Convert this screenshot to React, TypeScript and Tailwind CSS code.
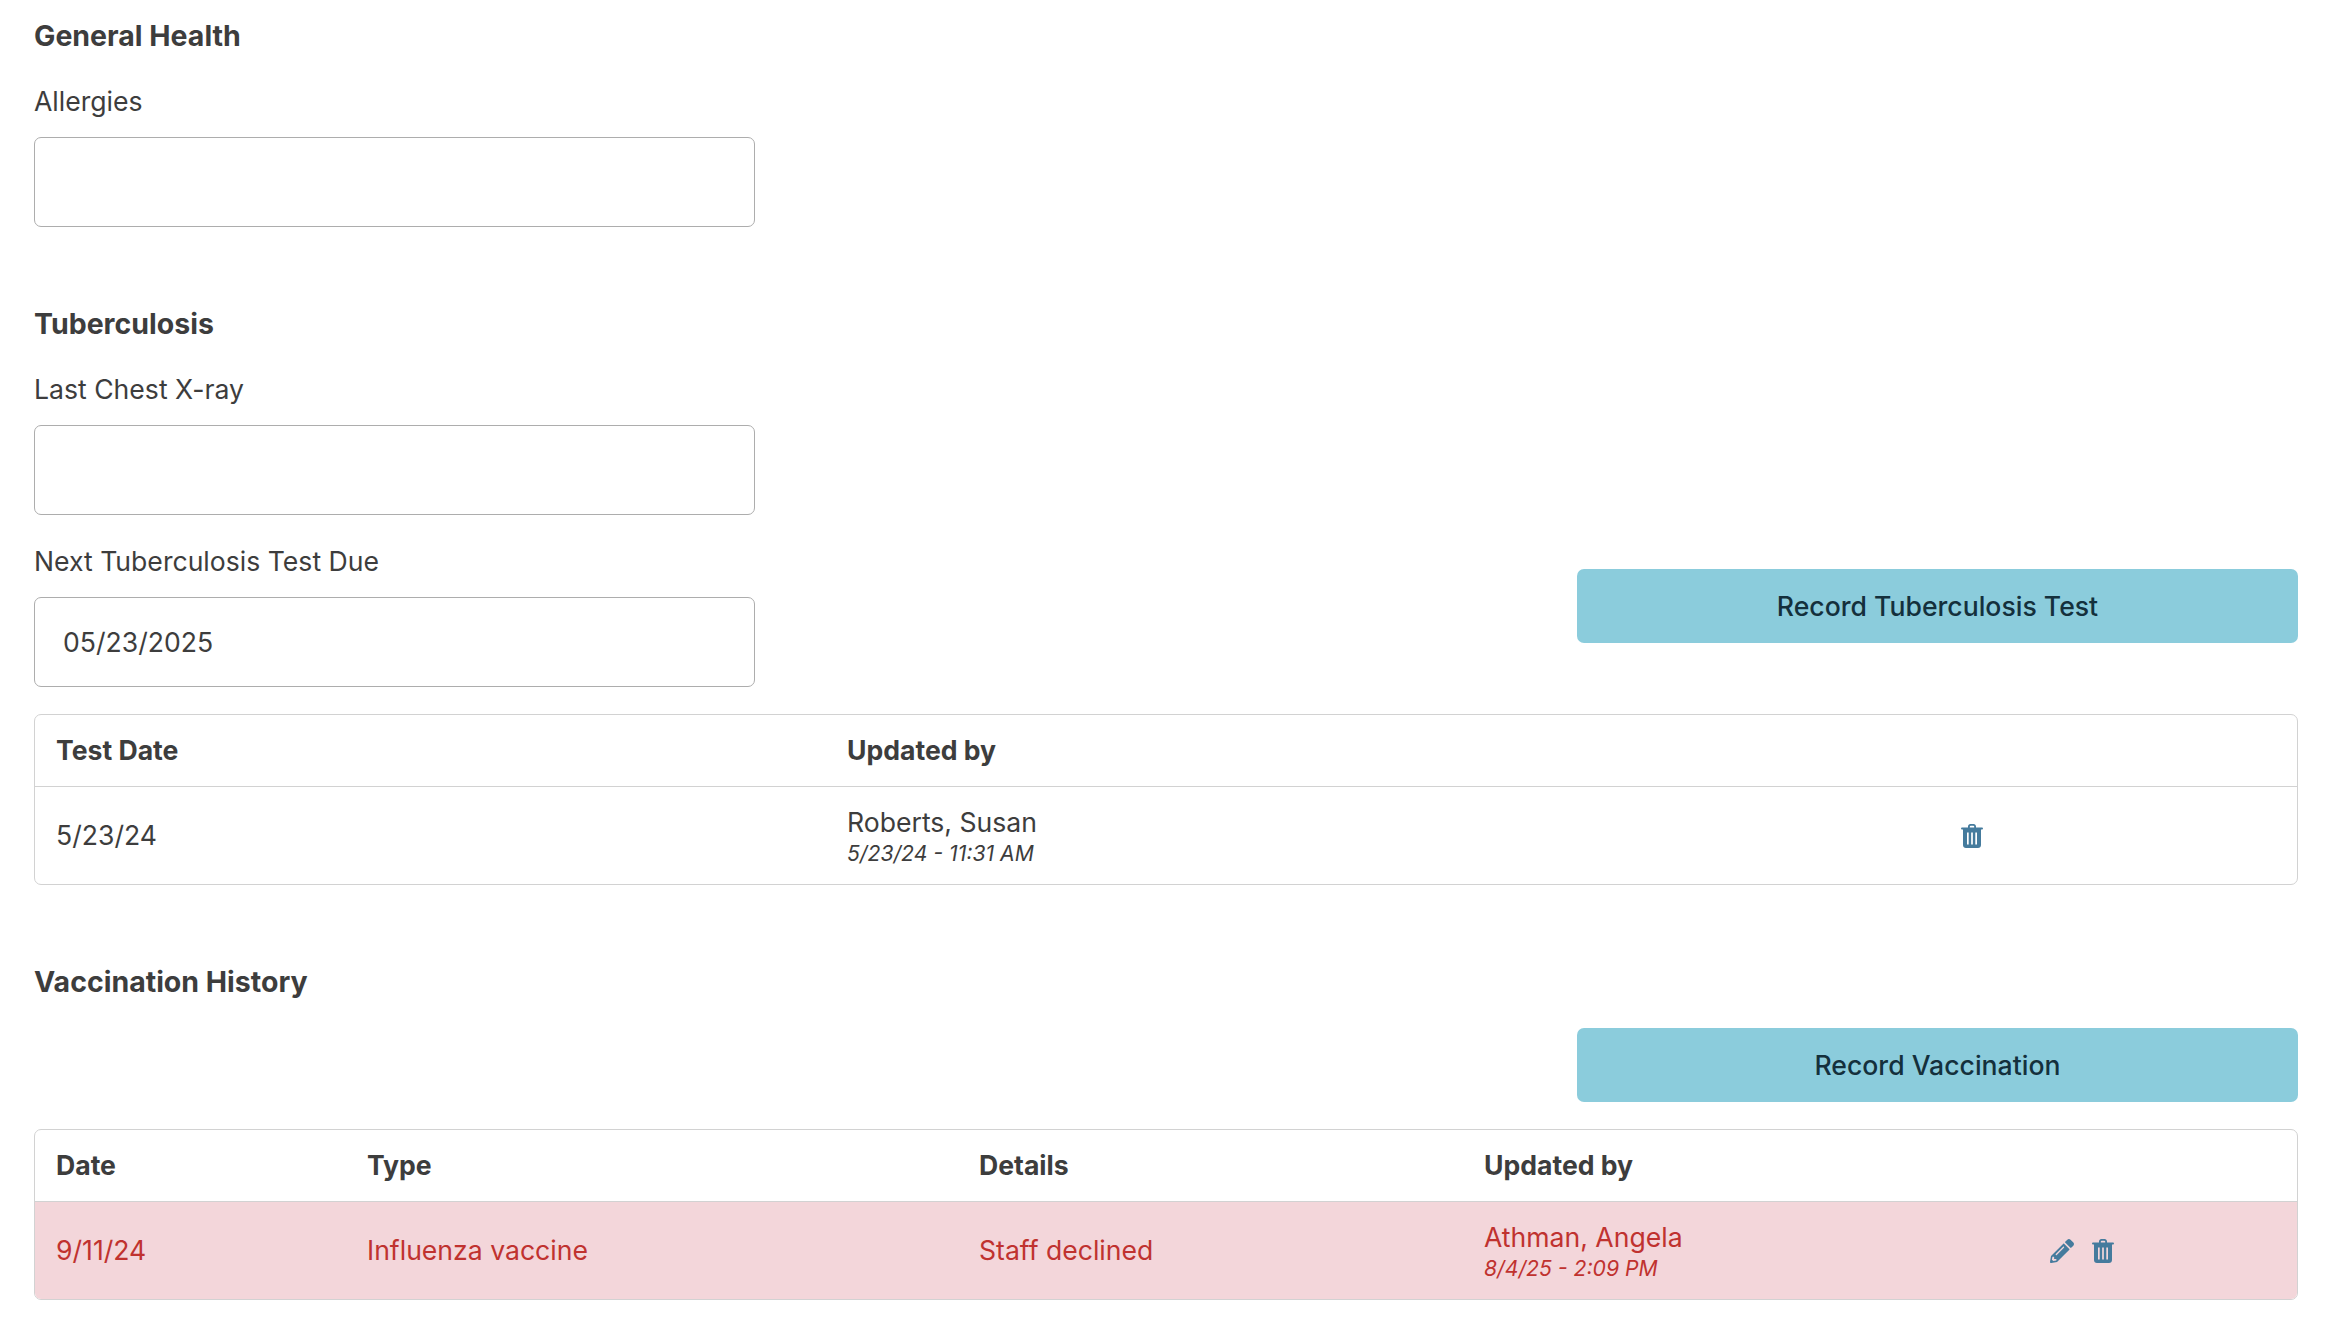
import { FaPencilAlt } from "react-icons/fa";

function TrashIcon() {
  return (
    <svg viewBox="0 0 22 24" className="w-[22px] h-[24px] shrink-0 fill-[#457b9d]">
      <path d="M7 4 V2.4 C7 1 8 0 9.4 0 H12.6 C14 0 15 1 15 2.4 V4 H13.2 V2.6 C13.2 2 12.8 1.7 12.3 1.7 H9.7 C9.2 1.7 8.8 2 8.8 2.6 V4 Z" />
      <rect x="0" y="3.6" width="22" height="2" rx="1" />
      <path
        fillRule="evenodd"
        d="M2 5 H20 V21 C20 22.8 18.8 24 17 24 H5 C3.2 24 2 22.8 2 21 Z M6 8.5 V20.5 H7.7 V8.5 Z M10.15 8.5 V20.5 H11.85 V8.5 Z M14.3 8.5 V20.5 H16 V8.5 Z"
      />
    </svg>
  );
}

function Field({ label, value, className }: { label: string; value?: string; className?: string }) {
  return (
    <div className={className}>
      <label className="block h-[34px] leading-[34px] mb-[19px]">{label}</label>
      <div className="w-[721px] h-[90px] border border-[#adadad] rounded-[7px] flex items-center px-[28px] pt-[2px]">
        {value}
      </div>
    </div>
  );
}

function RecordButton({ label }: { label: string }) {
  return (
    <button className="w-[721px] h-[74px] pt-[2px] bg-[#8bccdc] rounded-[7px] font-medium text-[#14303c]">
      {label}
    </button>
  );
}

function UpdatedBy({ name, when }: { name: string; when: string }) {
  return (
    <div>
      <div className="leading-[34px]">{name}</div>
      <div className="text-[21.2px] leading-[26px] pt-[1px] italic">{when}</div>
    </div>
  );
}

export default function App() {
  return (
    <div className="bg-white min-h-[1334px] pl-[34px] pr-[30px] text-[26.6px] text-[#3d3d3d] font-['Inter',sans-serif]">
      <h2 className="pt-[19px] h-[53px] leading-[34px] text-[28.5px] font-bold">General Health</h2>
      <Field label="Allergies" className="mt-[31px]" />

      <h2 className="mt-[80px] h-[34px] leading-[34px] text-[28.5px] font-bold">Tuberculosis</h2>
      <Field label="Last Chest X-ray" className="mt-[31px]" />
      <div className="flex justify-between items-start mt-[29px]">
        <Field label="Next Tuberculosis Test Due" value="05/23/2025" />
        <div className="pt-[25px]">
          <RecordButton label="Record Tuberculosis Test" />
        </div>
      </div>

      <div className="mt-[27px] border border-[#d2d2d2] rounded-[7px] overflow-hidden">
        <table className="w-full table-fixed">
          <colgroup>
            <col className="w-[812px]" />
            <col className="w-[1094px]" />
            <col />
          </colgroup>
          <thead>
            <tr className="h-[71px] border-b border-[#d2d2d2] text-left">
              <th className="pl-[21px] pt-[1px] font-bold">Test Date</th>
              <th className="pt-[1px] font-bold">Updated by</th>
              <th />
            </tr>
          </thead>
          <tbody>
            <tr className="h-[98px]">
              <td className="pl-[21px] pt-[2px]">5/23/24</td>
              <td>
                <UpdatedBy name="Roberts, Susan" when="5/23/24 - 11:31 AM" />
              </td>
              <td>
                <div className="flex pl-[20px] pt-[1px]">
                  <TrashIcon />
                </div>
              </td>
            </tr>
          </tbody>
        </table>
      </div>

      <h2 className="mt-[80px] h-[34px] leading-[34px] text-[28.5px] font-bold">Vaccination History</h2>

      <div className="flex justify-end mt-[29px]">
        <RecordButton label="Record Vaccination" />
      </div>

      <div className="mt-[27px] border border-[#d2d2d2] rounded-[7px] overflow-hidden">
        <table className="w-full table-fixed">
          <colgroup>
            <col className="w-[332px]" />
            <col className="w-[612px]" />
            <col className="w-[505px]" />
            <col className="w-[566px]" />
            <col />
          </colgroup>
          <thead>
            <tr className="h-[71px] border-b border-[#d2d2d2] text-left">
              <th className="pl-[21px] pt-[1px] font-bold">Date</th>
              <th className="pt-[1px] font-bold">Type</th>
              <th className="pt-[1px] font-bold">Details</th>
              <th className="pt-[1px] font-bold">Updated by</th>
              <th />
            </tr>
          </thead>
          <tbody>
            <tr className="h-[98px] bg-[#f3d6da] text-[#c0322f]">
              <td className="pl-[21px] pt-[2px]">9/11/24</td>
              <td className="pt-[2px]">Influenza vaccine</td>
              <td className="pt-[2px]">Staff declined</td>
              <td>
                <UpdatedBy name="Athman, Angela" when="8/4/25 - 2:09 PM" />
              </td>
              <td>
                <div className="flex items-center gap-[18px] pt-[1px] text-[#457b9d]">
                  <FaPencilAlt className="w-[24px] h-[24px]" />
                  <TrashIcon />
                </div>
              </td>
            </tr>
          </tbody>
        </table>
      </div>
    </div>
  );
}
